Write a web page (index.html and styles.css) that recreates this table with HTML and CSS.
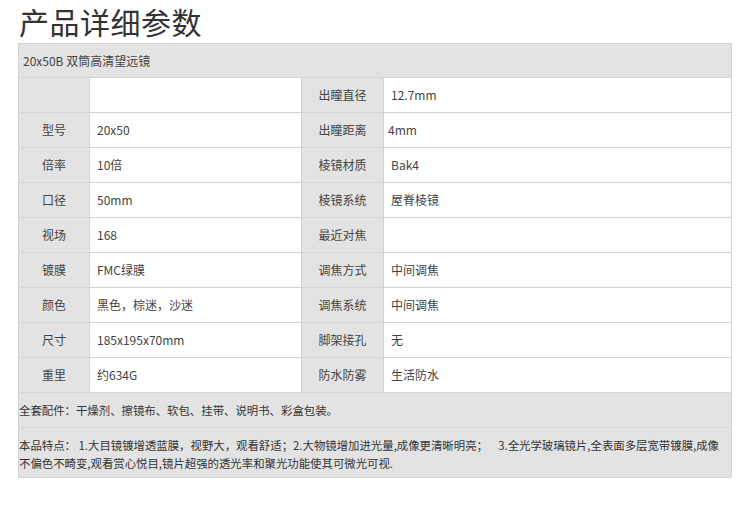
FILE: index.html
```html
<!DOCTYPE html>
<html lang="zh-CN">
<head>
<meta charset="utf-8">
<title>产品详细参数</title>
<link rel="stylesheet" href="styles.css">
</head>
<body>
<div class="page">
  <h1 class="title">产品详细参数</h1>
  <table class="spec">
    <colgroup>
      <col class="c1"><col class="c2"><col class="c3"><col class="c4">
    </colgroup>
    <tr><td class="head" colspan="4">20x50B 双筒高清望远镜</td></tr>
    <tr><td class="label"></td><td class="value"></td><td class="label">出瞳直径</td><td class="value">12.7mm</td></tr>
    <tr><td class="label">型号</td><td class="value">20x50</td><td class="label">出瞳距离</td><td class="value tight">4mm</td></tr>
    <tr><td class="label">倍率</td><td class="value">10倍</td><td class="label">棱镜材质</td><td class="value">Bak4</td></tr>
    <tr><td class="label">口径</td><td class="value">50mm</td><td class="label">棱镜系统</td><td class="value">屋脊棱镜</td></tr>
    <tr><td class="label">视场</td><td class="value">168</td><td class="label">最近对焦</td><td class="value"></td></tr>
    <tr><td class="label">镀膜</td><td class="value">FMC绿膜</td><td class="label">调焦方式</td><td class="value">中间调焦</td></tr>
    <tr><td class="label">颜色</td><td class="value">黑色，棕迷，沙迷</td><td class="label">调焦系统</td><td class="value">中间调焦</td></tr>
    <tr><td class="label">尺寸</td><td class="value">185x195x70mm</td><td class="label">脚架接孔</td><td class="value">无</td></tr>
    <tr><td class="label">重里</td><td class="value">约634G</td><td class="label">防水防雾</td><td class="value">生活防水</td></tr>
    <tr><td class="note" colspan="4">全套配件：干燥剂、擦镜布、软包、挂带、说明书、彩盒包装。</td></tr>
    <tr><td class="note long" colspan="4">本品特点： 1.大目镜镀增透蓝膜，视野大，观看舒适；2.大物镜增加进光量,成像更清晰明亮；&nbsp;&nbsp;&nbsp; 3.全光学玻璃镜片,全表面多层宽带镀膜,成像不偏色不畸变,观看赏心悦目,镜片超强的透光率和聚光功能使其可微光可视.</td></tr>
  </table>
</div>
</body>
</html>
```

FILE: styles.css
```css
* { box-sizing: border-box; }
html, body { margin: 0; padding: 0; background: #fff; }
body {
  font-family: "Noto Sans CJK SC", "Noto Sans", sans-serif;
  color: #444;
}
.page {
  padding: 0 0 0 18px;
  width: 732px;
}
.title {
  margin: 0;
  padding-left: 1px;
  height: 43px;
  line-height: 43px;
  font-size: 30px;
  font-weight: normal;
  color: #333;
  letter-spacing: 0.5px;
}
.spec {
  width: 713px;
  border-collapse: collapse;
  table-layout: fixed;
  font-size: 12px;
  border: 1px solid #d2d2d2;
}
.c1 { width: 71px; }
.c2 { width: 212px; }
.c3 { width: 82px; }
.c4 { width: 348px; }
.spec td {
  border: 1px solid #d4d4d4;
  height: 35px;
  padding: 0;
  line-height: 18px;
  vertical-align: middle;
  color: #444;
}
.spec .head {
  background: #e3e3e3;
  padding-left: 4px;
  height: 34px;
}
.spec .label {
  background: #e3e3e3;
  text-align: center;
}
.spec .value {
  background: #fff;
  padding-left: 7px;
}
.spec .value.tight { padding-left: 4px; }
.spec .note {
  background: #e3e3e3;
  padding-left: 0;
  color: #333;
  font-size: 11.4px;
}
.spec .long {
  height: 50px;
  padding: 8px 8px 5px 0;
  vertical-align: top;
}
```
